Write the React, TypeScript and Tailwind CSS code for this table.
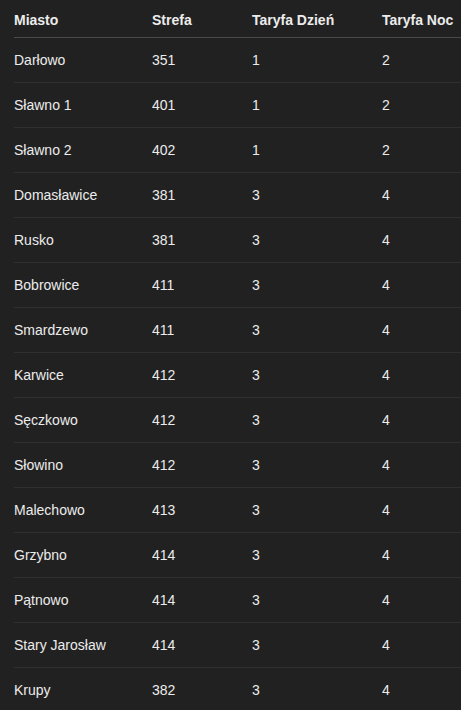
const rows: [string, string, string, string][] = [
  ["Darłowo", "351", "1", "2"],
  ["Sławno 1", "401", "1", "2"],
  ["Sławno 2", "402", "1", "2"],
  ["Domasławice", "381", "3", "4"],
  ["Rusko", "381", "3", "4"],
  ["Bobrowice", "411", "3", "4"],
  ["Smardzewo", "411", "3", "4"],
  ["Karwice", "412", "3", "4"],
  ["Sęczkowo", "412", "3", "4"],
  ["Słowino", "412", "3", "4"],
  ["Malechowo", "413", "3", "4"],
  ["Grzybno", "414", "3", "4"],
  ["Pątnowo", "414", "3", "4"],
  ["Stary Jarosław", "414", "3", "4"],
  ["Krupy", "382", "3", "4"],
];

export default function App() {
  return (
    <div className="h-[710px] overflow-hidden bg-[#212121] pl-[14px] font-['Liberation_Sans',sans-serif] text-[14px] text-[#ececec]">
      <table className="w-[600px] table-fixed border-collapse text-left">
        <colgroup>
          <col className="w-[138px]" />
          <col className="w-[100px]" />
          <col className="w-[130px]" />
          <col />
        </colgroup>
        <thead>
          {/* header row with the brighter rule under it */}
          <tr className="border-b border-[#4a4a4a]">
            <th className="pt-[10px] pb-[7px] font-semibold leading-5">Miasto</th>
            <th className="pt-[10px] pb-[7px] font-semibold leading-5">Strefa</th>
            <th className="pt-[10px] pb-[7px] font-semibold leading-5">Taryfa Dzień</th>
            <th className="pt-[10px] pb-[7px] font-semibold leading-5">Taryfa Noc</th>
          </tr>
        </thead>
        <tbody>
          {rows.map((r) => (
            <tr key={r[0]} className="border-b border-[#2f2f2f]">
              {r.map((c, i) => (
                <td key={i} className="py-3 leading-5">
                  {c}
                </td>
              ))}
            </tr>
          ))}
        </tbody>
      </table>
    </div>
  );
}
